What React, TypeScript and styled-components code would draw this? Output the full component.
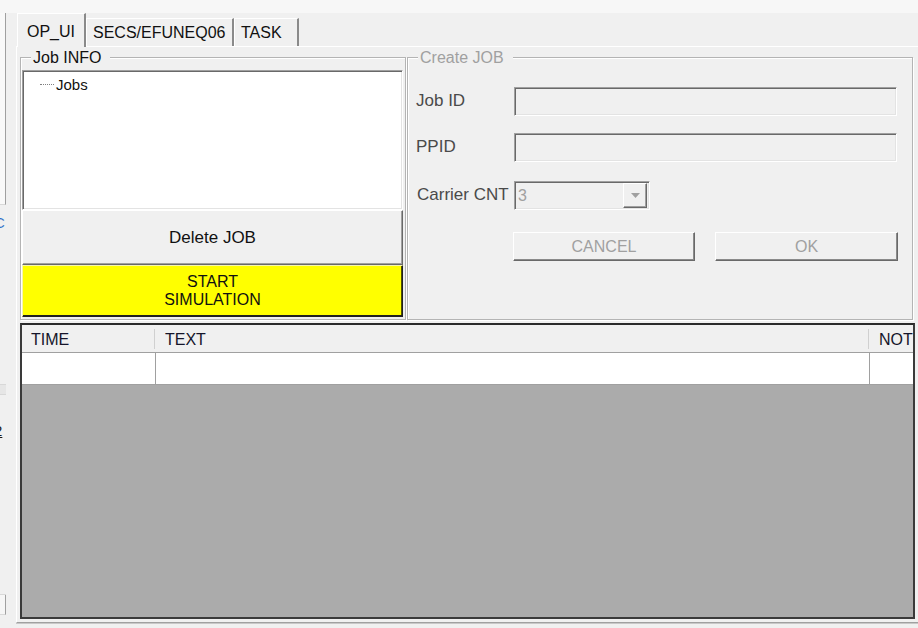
import { createGlobalStyle, styled, css } from "styled-components";

const GlobalStyle = createGlobalStyle`
  html, body {
    margin: 0;
    padding: 0;
  }
  body {
    background: #f0f0f0;
    font-family: "Liberation Sans", Arial, sans-serif;
    font-size: 16px;
    color: #000;
  }
  * {
    box-sizing: border-box;
  }
`;

const sunken = css`
  border: 1px solid;
  border-color: #a0a0a0 #ffffff #ffffff #a0a0a0;
  box-shadow: inset 1px 1px 0 #696969, inset -1px -1px 0 #e3e3e3;
`;

const raised = css`
  border: 1px solid;
  border-color: #ffffff #696969 #696969 #ffffff;
  box-shadow: inset -1px -1px 0 #a0a0a0;
`;

const Screen = styled.div`
  width: 918px;
  height: 628px;
  overflow: hidden;
  display: flex;
  flex-direction: column;
  background: #f0f0f0;
`;

const TopBand = styled.div`
  height: 13px;
  flex: none;
  background: #f7f7f7;
`;

const Body = styled.div`
  flex: 1;
  display: flex;
  min-height: 0;
`;

const LeftStrip = styled.div`
  width: 6px;
  flex: none;
  display: flex;
  flex-direction: column;
`;

const StripPart = styled.div<{ $h: number; $bg: string; $line?: boolean }>`
  height: ${(p) => p.$h}px;
  flex: none;
  overflow: hidden;
  background: ${(p) => p.$bg};
  border-right: ${(p) => (p.$line ? "1px solid #a0a0a0" : "none")};
  border-bottom: 1px solid #d8d8d8;
`;

const StripGlyph = styled.div<{ $color: string; $top: number }>`
  margin: ${(p) => p.$top}px 0 0 -6px;
  font-size: 15px;
  line-height: 15px;
  color: ${(p) => p.$color};
`;

const TabControl = styled.div`
  margin-left: 10px;
  width: 906px;
  flex: none;
  display: flex;
  flex-direction: column;
`;

const TabStrip = styled.div`
  height: 33px;
  display: flex;
  align-items: flex-end;
  padding-left: 1px;
  position: relative;
  z-index: 1;
`;

const Tab = styled.div<{ $active?: boolean; $w: number }>`
  width: ${(p) => p.$w}px;
  height: ${(p) => (p.$active ? 34 : 28)}px;
  margin-bottom: ${(p) => (p.$active ? -1 : 0)}px;
  padding-left: ${(p) => (p.$active ? 9 : 6)}px;
  padding-top: ${(p) => (p.$active ? 3 : 0)}px;
  display: flex;
  align-items: center;
  background: #f0f0f0;
  border-left: 1px solid #ffffff;
  border-top: 1px solid #ffffff;
  border-right: 2px solid #8a8a8a;
  white-space: nowrap;
  font-size: 16px;
  color: #111;
`;

const TabPage = styled.div`
  height: 577px;
  border: 1px solid;
  border-color: #ffffff #a0a0a0 #a0a0a0 #ffffff;
  box-shadow: 0 1px 0 #c8c8c8;
  padding: 2px 0 0 3px;
`;

const PageGrid = styled.div`
  display: grid;
  grid-template-columns: 386px 506px;
  grid-template-rows: 271px 296px;
  column-gap: 1px;
  row-gap: 3px;
`;

const GroupBox = styled.fieldset`
  margin: 0;
  padding: 0 2px 2px 1px;
  min-width: 0;
  border: 1px solid #b4b4b4;
  box-shadow: inset 1px 1px 0 #ffffff, 1px 1px 0 #ffffff;
  display: flex;
  flex-direction: column;
`;

const GroupTitle = styled.legend<{ $disabled?: boolean }>`
  margin-left: 9px;
  padding: 0 9px 0 2px;
  line-height: 17px;
  font-size: 16px;
  background: #f0f0f0;
  color: ${(p) => (p.$disabled ? "#a0a0a0" : "#111")};
`;

const TreeView = styled.div`
  margin-top: 4px;
  height: 140px;
  background: #ffffff;
  ${sunken};
  padding: 5px 0 0 17px;
`;

const TreeNode = styled.div`
  display: flex;
  align-items: center;
  line-height: 17px;
  font-size: 15px;
  color: #111;
`;

const TreeDots = styled.span`
  width: 14px;
  margin-right: 2px;
  border-top: 1px dotted #808080;
`;

const BigButton = styled.div<{ $yellow?: boolean; $h: number }>`
  height: ${(p) => p.$h}px;
  display: flex;
  flex-direction: column;
  align-items: center;
  justify-content: center;
  text-align: center;
  line-height: 18px;
  font-size: ${(p) => (p.$yellow ? 16 : 17)}px;
  color: #111;
  ${(p) =>
    p.$yellow
      ? css`
          background: #ffff00;
          border: 1px solid;
          border-color: #f5f5b0 #202020 #202020 #f5f5b0;
          box-shadow: inset 0 -1px 0 #202020, inset -1px 0 0 #505000;
        `
      : css`
          background: #f0f0f0;
          ${raised};
        `}
`;

const Form = styled.div`
  padding-left: 6px;
  display: flex;
  flex-direction: column;
`;

const FormRow = styled.div<{ $top: number }>`
  margin-top: ${(p) => p.$top}px;
  display: grid;
  grid-template-columns: 99px auto;
  align-items: center;
  height: 29px;
`;

const Label = styled.div<{ $nudge?: number }>`
  font-size: 17px;
  color: #4a4a4a;
  white-space: nowrap;
  padding-left: ${(p) => p.$nudge ?? 0}px;
  margin-top: -2px;
`;

const TextBox = styled.div`
  width: 383px;
  height: 29px;
  background: #f0f0f0;
  ${sunken};
`;

const Combo = styled.div`
  width: 136px;
  height: 29px;
  background: #f0f0f0;
  ${sunken};
  padding: 2px 2px 2px 3px;
  display: flex;
  align-items: center;
  justify-content: space-between;
  color: #a0a0a0;
  font-size: 16px;
`;

const ComboButton = styled.div`
  width: 24px;
  height: 25px;
  background: #f0f0f0;
  ${raised};
  display: flex;
  align-items: center;
  justify-content: center;
`;

const ButtonRow = styled.div<{ $top: number }>`
  margin-top: ${(p) => p.$top}px;
  padding-left: 98px;
  display: flex;
  gap: 20px;
`;

const FlatButton = styled.div<{ $w: number }>`
  width: ${(p) => p.$w}px;
  height: 29px;
  background: #f0f0f0;
  ${raised};
  box-shadow: inset -1px -1px 0 #8a8a8a;
  display: flex;
  align-items: center;
  justify-content: center;
  color: #a0a0a0;
  font-size: 16px;
`;

const DataGrid = styled.div`
  grid-column: 1 / span 2;
  width: 895px;
  border: 2px solid #3a3a3a;
  border-top-color: #2a2a2a;
  background: #ababab;
  display: flex;
  flex-direction: column;
  overflow: hidden;
`;

const GridRow = styled.div<{ $header?: boolean }>`
  display: grid;
  grid-template-columns: 134px 714px 60px;
  height: ${(p) => (p.$header ? 28 : 32)}px;
  background: ${(p) => (p.$header ? "#f0f0f0" : "#ffffff")};
  border-bottom: 1px solid #a0a0a0;
`;

const Cell = styled.div<{ $header?: boolean }>`
  display: flex;
  align-items: center;
  padding-left: 9px;
  padding-top: ${(p) => (p.$header ? 3 : 0)}px;
  white-space: nowrap;
  overflow: hidden;
  font-size: 16px;
  color: #15152a;
  border-right: 1px solid ${(p) => (p.$header ? "#d0d0d0" : "#a0a0a0")};
  ${(p) =>
    p.$header &&
    css`
      border-right-color: transparent;
      background-image: linear-gradient(#d0d0d0, #d0d0d0);
      background-size: 1px 20px;
      background-position: right center;
      background-repeat: no-repeat;
    `}
`;

const Arrow = () => (
  <svg width="9" height="5" viewBox="0 0 9 5">
    <path d="M0 0h9L4.5 5z" fill="#a0a0a0" />
  </svg>
);

export default function App() {
  return (
    <Screen>
      <GlobalStyle />
      <TopBand />
      <Body>
        <LeftStrip>
          <StripPart $h={192} $bg="#f9f9f9" $line />
          <StripPart $h={180} $bg="#f0f0f0">
            <StripGlyph $color="#2f6fc8" $top={10}>
              C
            </StripGlyph>
          </StripPart>
          <StripPart $h={10} $bg="#e6e6e6" />
          <StripPart $h={200} $bg="#f0f0f0">
            <StripGlyph $color="#1a1a1a" $top={28}>
              <u>2</u>
            </StripGlyph>
          </StripPart>
          <StripPart $h={20} $bg="#f6f6f6" $line />
        </LeftStrip>
        <TabControl>
          <TabStrip>
            <Tab $active $w={69}>
              OP_UI
            </Tab>
            <Tab $w={148}>SECS/EFUNEQ06</Tab>
            <Tab $w={65}>TASK</Tab>
          </TabStrip>
          <TabPage>
            <PageGrid>
              <GroupBox>
                <GroupTitle>Job INFO</GroupTitle>
                <TreeView>
                  <TreeNode>
                    <TreeDots />
                    Jobs
                  </TreeNode>
                </TreeView>
                <BigButton $h={55}>Delete JOB</BigButton>
                <BigButton $yellow $h={52}>
                  <span>START</span>
                  <span>SIMULATION</span>
                </BigButton>
              </GroupBox>
              <GroupBox>
                <GroupTitle $disabled>Create JOB</GroupTitle>
                <Form>
                  <FormRow $top={21}>
                    <Label $nudge={1}>Job ID</Label>
                    <TextBox />
                  </FormRow>
                  <FormRow $top={17}>
                    <Label $nudge={1}>PPID</Label>
                    <TextBox />
                  </FormRow>
                  <FormRow $top={19}>
                    <Label $nudge={2}>Carrier CNT</Label>
                    <Combo>
                      3
                      <ComboButton>
                        <Arrow />
                      </ComboButton>
                    </Combo>
                  </FormRow>
                  <ButtonRow $top={22}>
                    <FlatButton $w={182}>CANCEL</FlatButton>
                    <FlatButton $w={183}>OK</FlatButton>
                  </ButtonRow>
                </Form>
              </GroupBox>
              <DataGrid>
                <GridRow $header>
                  <Cell $header>TIME</Cell>
                  <Cell $header>TEXT</Cell>
                  <Cell $header>NOT</Cell>
                </GridRow>
                <GridRow>
                  <Cell />
                  <Cell />
                  <Cell />
                </GridRow>
              </DataGrid>
            </PageGrid>
          </TabPage>
        </TabControl>
      </Body>
    </Screen>
  );
}
